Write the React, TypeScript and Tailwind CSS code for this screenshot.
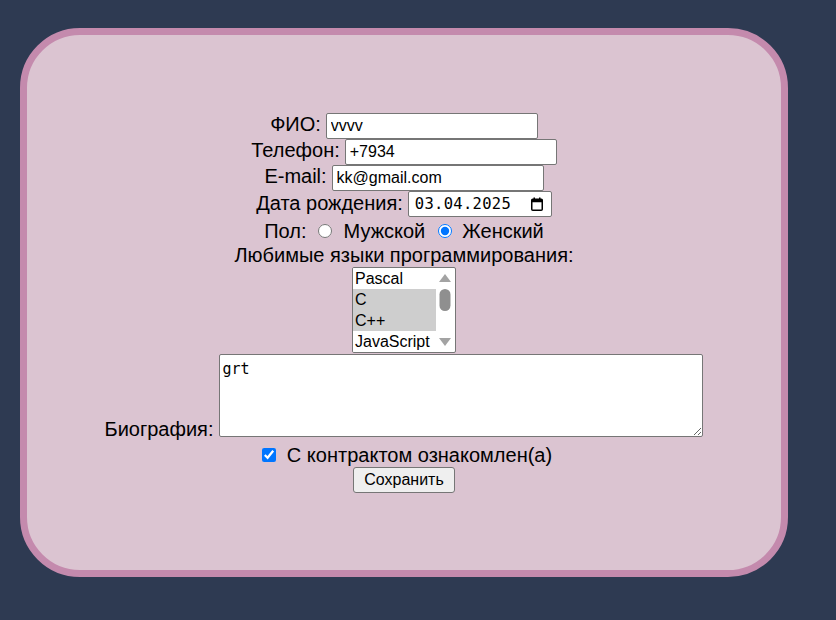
import React from "react";

function CalendarIcon() {
  return (
    <svg width="12" height="14" viewBox="0 0 12 14" fill="none">
      <rect x="0.75" y="2.25" width="10.5" height="11" rx="1" stroke="#000" strokeWidth="1.5" />
      <rect x="0.75" y="2.25" width="10.5" height="3" fill="#000" />
      <rect x="2.5" y="0.5" width="1.5" height="2.5" fill="#000" />
      <rect x="8" y="0.5" width="1.5" height="2.5" fill="#000" />
    </svg>
  );
}

function ListBox() {
  const items = [
    { label: "Pascal", sel: false },
    { label: "C", sel: true },
    { label: "C++", sel: true },
    { label: "JavaScript", sel: false },
  ];
  return (
    <div className="flex w-[104px] h-[86px] border border-[#767676] bg-white rounded-[2px] overflow-hidden">
      <div className="flex flex-col w-[83px]">
        {items.map((it) => (
          <div
            key={it.label}
            className={
              "h-[21px] pl-[2px] text-[16px] leading-[21px] whitespace-nowrap " +
              (it.sel ? "bg-[#cecece]" : "bg-white")
            }
          >
            {it.label}
          </div>
        ))}
      </div>
      <svg width="19" height="84" viewBox="0 0 19 84" className="shrink-0">
        <polygon points="3,14 15,14 9,6" fill="#a3a3a3" />
        <rect x="3.5" y="21" width="11" height="22" rx="5.5" fill="#8f8f8f" />
        <polygon points="3,70 15,70 9,78" fill="#a3a3a3" />
      </svg>
    </div>
  );
}

export default function App() {
  const inputCls =
    "w-[212px] h-[26px] border border-[#767676] rounded-[2px] bg-white pl-[4px] text-[16px] text-black outline-none font-['Liberation_Sans',Arial,sans-serif]";
  return (
    <div className="w-[836px] h-[620px] bg-[#2e3a52] pt-[28px] pl-[20px] font-['Liberation_Sans',Arial,sans-serif] text-black">
      <div className="w-[768px] h-[549px] rounded-[60px] border-[7px] border-[#c48aad] bg-[#dbc4d1] flex flex-col items-center justify-center text-[20px] leading-[23px]">
        <div className="flex items-baseline justify-center gap-[5px]">
          <span>ФИО:</span>
          <input className={inputCls} defaultValue="vvvv" readOnly />
        </div>
        <div className="flex items-baseline justify-center gap-[5px]">
          <span>Телефон:</span>
          <input className={inputCls} defaultValue="+7934" readOnly />
        </div>
        <div className="flex items-baseline justify-center gap-[5px]">
          <span>E-mail:</span>
          <input className={inputCls} defaultValue="kk@gmail.com" readOnly />
        </div>
        <div className="flex items-center justify-center gap-[5px]">
          <span>Дата рождения:</span>
          <div className="flex items-center justify-between w-[144px] h-[26px] border border-[#767676] rounded-[2px] bg-white pl-[6px] pr-[8px]">
            <span className="font-['DejaVu_Sans_Mono',monospace] text-[15.5px] leading-[20px] tracking-[0.3px]">03.04.2025</span>
            <CalendarIcon />
          </div>
        </div>
        <div className="flex items-center justify-center mt-[3px]">
          <span>Пол:</span>
          <input type="radio" name="pol" className="m-0 ml-[11px] mr-[12px] w-[14px] h-[14px]" readOnly />
          <span>Мужской</span>
          <input type="radio" name="pol" defaultChecked className="m-0 ml-[13px] mr-[10px] w-[14px] h-[14px]" readOnly />
          <span>Женский</span>
        </div>
        <div className="mt-[1px]">Любимые языки программирования:</div>
        <ListBox />
        <div className="flex items-end justify-center gap-[6px] mt-[1px]">
          <span>Биография:</span>
          <textarea
            className="w-[484px] h-[83px] mb-[4px] border border-[#767676] rounded-[2px] bg-white pl-[2px] pt-[5px] font-['DejaVu_Sans_Mono',monospace] text-[15px] leading-[18px] outline-none"
            defaultValue="grt"
            readOnly
          />
        </div>
        <div className="flex items-center justify-center mt-[3px] pl-[6px]">
          <input type="checkbox" defaultChecked className="m-0 mr-[11px] w-[14px] h-[14px]" readOnly />
          <span>С контрактом ознакомлен(а)</span>
        </div>
        <button className="w-[102px] h-[26px] border border-[#767676] rounded-[3px] bg-[#efefef] text-[16px] leading-[20px]">
          Сохранить
        </button>
      </div>
    </div>
  );
}
